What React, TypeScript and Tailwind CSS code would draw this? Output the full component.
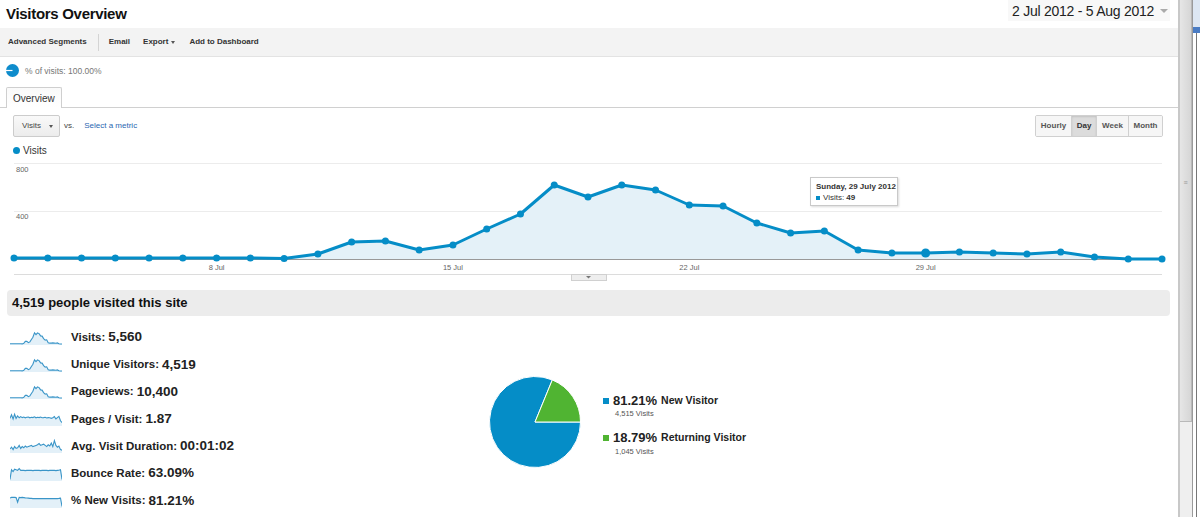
import React from "react";

const visitYs = [
  258, 258, 258, 258, 258, 258, 258, 258, 258.5, 254, 242, 241, 250, 245, 229, 214, 185, 197, 185, 190,
  205, 206, 223, 233, 231, 250, 253, 253, 252, 253, 254, 252, 257, 259, 259,
];

const px = (i: number) => 14 + (i * 1148) / 34;
const py = (i: number) => visitYs[i] - 160;

const linePath = visitYs.map((_, i) => `${i === 0 ? "M" : "L"}${px(i).toFixed(1)},${py(i)}`).join(" ");
const areaPath = `${linePath} L${px(34)},99 L${px(0)},99 Z`;

// sparkline shapes, 0 = bottom, 1 = top
const visitsShape = visitYs.map((y) => (259 - y) / 80);
const pagesShape = [
  0.55, 0.85, 0.5, 0.9, 0.55, 0.75, 0.6, 0.7, 0.62, 0.66, 0.6, 0.64, 0.66, 0.6, 0.64, 0.62, 0.68, 0.6, 0.64,
  0.62, 0.66, 0.6, 0.62, 0.64, 0.58, 0.62, 0.6, 0.56, 0.6, 0.7, 0.5, 0.62, 0.72, 0.35, 0.2,
];
const durationShape = [
  0.25, 0.4, 0.2, 0.45, 0.3, 0.35, 0.55, 0.3, 0.45, 0.35, 0.5, 0.4, 0.45, 0.5, 0.55, 0.45, 0.5, 0.55, 0.6,
  0.7, 0.55, 0.6, 0.65, 0.55, 0.45, 0.6, 0.5, 0.75, 0.45, 0.95, 0.55, 0.4, 0.5, 0.2, 0.15,
];
const bounceShape = [
  0.05, 0.85, 0.7, 0.9, 0.85, 0.8, 0.95, 0.8, 0.82, 0.8, 0.78, 0.8, 0.82, 0.8, 0.8, 0.78, 0.8, 0.8, 0.82,
  0.8, 0.78, 0.8, 0.8, 0.82, 0.8, 0.78, 0.8, 0.8, 0.82, 0.8, 0.78, 0.8, 0.82, 0.85, 0.05,
];
const newShape = [
  0.75, 0.8, 0.82, 0.8, 0.78, 0.4, 0.8, 0.78, 0.8, 0.78, 0.76, 0.75, 0.74, 0.72, 0.72, 0.7, 0.7, 0.7, 0.7,
  0.7, 0.7, 0.71, 0.7, 0.7, 0.7, 0.7, 0.71, 0.7, 0.7, 0.7, 0.7, 0.7, 0.72, 0.74, 0.05,
];

const metrics = [
  { label: "Visits:", value: "5,560", shape: visitsShape },
  { label: "Unique Visitors:", value: "4,519", shape: visitsShape },
  { label: "Pageviews:", value: "10,400", shape: visitsShape },
  { label: "Pages / Visit:", value: "1.87", shape: pagesShape },
  { label: "Avg. Visit Duration:", value: "00:01:02", shape: durationShape },
  { label: "Bounce Rate:", value: "63.09%", shape: bounceShape },
  { label: "% New Visits:", value: "81.21%", shape: newShape },
];

function Sparkline({ shape }: { shape: number[] }) {
  const w = 52;
  const h = 14;
  const pts = shape.map((v, i) => [(i * w) / (shape.length - 1), h - 1 - Math.min(1, v) * (h - 2)]);
  const line = pts.map((p, i) => `${i === 0 ? "M" : "L"}${p[0].toFixed(1)},${p[1].toFixed(1)}`).join(" ");
  return (
    <svg width={w} height={h} viewBox={`0 0 ${w} ${h}`} className="shrink-0">
      <path d={`${line} L${w},${h} L0,${h} Z`} fill="#e3f0f8" />
      <path d={line} fill="none" stroke="#3a95c8" strokeWidth="1.1" />
    </svg>
  );
}

function TrafficChart() {
  const gridX1 = 14;
  const gridX2 = 1162;
  return (
    <div className="relative h-[122px] w-full">
      <svg width="1178" height="122" viewBox="0 0 1178 122" className="block">
        <line x1={gridX1} x2={gridX2} y1="3.5" y2="3.5" stroke="#ececec" />
        <line x1={gridX1} x2={gridX2} y1="51.5" y2="51.5" stroke="#ececec" />
        <text x="16" y="12" fontSize="7.5" fill="#666" fontFamily="Liberation Sans, Arial, sans-serif">800</text>
        <text x="16" y="59" fontSize="7.5" fill="#666" fontFamily="Liberation Sans, Arial, sans-serif">400</text>
        <path d={areaPath} fill="#e4f1f8" />
        <line x1={gridX1} x2={gridX2} y1="99.5" y2="99.5" stroke="#999" />
        <path d={linePath} fill="none" stroke="#058dc7" strokeWidth="3" strokeLinejoin="round" />
        {visitYs.map((_, i) => (
          <circle key={i} cx={px(i)} cy={py(i)} r={i === 27 ? 4.5 : 3.5} fill="#058dc7" />
        ))}
        {[
          { i: 6, t: "8 Jul" },
          { i: 13, t: "15 Jul" },
          { i: 20, t: "22 Jul" },
          { i: 27, t: "29 Jul" },
        ].map((l) => (
          <text
            key={l.t}
            x={px(l.i)}
            y="110"
            textAnchor="middle"
            fontSize="7.5"
            fill="#666"
            fontFamily="Liberation Sans, Arial, sans-serif"
          >
            {l.t}
          </text>
        ))}
        <line x1={gridX1} x2={gridX2} y1="114.5" y2="114.5" stroke="#dcdcdc" />
        <rect x="571.5" y="114.5" width="35" height="6" fill="#eeeeee" stroke="#d0d0d0" />
        <path d="M586 116 L591 116 L588.5 118.5 Z" fill="#777" />
      </svg>
      <div className="absolute left-[810px] top-[17px] h-[29px] w-[88px] border border-[#c9c9c9] bg-white pl-[5px] pt-[3px] shadow-[1px_1px_2px_rgba(0,0,0,0.15)]">
        <div className="whitespace-nowrap text-[8px] font-bold leading-[11px] text-[#333]">Sunday, 29 July 2012</div>
        <div className="flex items-center whitespace-nowrap text-[8px] leading-[11px] text-[#333]">
          <span className="mr-[3px] inline-block h-[4px] w-[4px] bg-[#058dc7]" />
          Visits: <span className="ml-[2px] font-bold">49</span>
        </div>
      </div>
    </div>
  );
}

function Pie() {
  const cx = 46;
  const cy = 46;
  const r = 45.5;
  const a = (67.64 * Math.PI) / 180;
  const ex = cx + r * Math.cos(a);
  const ey = cy - r * Math.sin(a);
  return (
    <svg width="92" height="92" viewBox="0 0 92 92" className="shrink-0">
      <path d={`M${cx},${cy} L${ex},${ey} A${r},${r} 0 1 0 ${cx + r},${cy} Z`} fill="#058dc7" stroke="#fff" strokeWidth="1" />
      <path d={`M${cx},${cy} L${cx + r},${cy} A${r},${r} 0 0 0 ${ex},${ey} Z`} fill="#50b432" stroke="#fff" strokeWidth="1" />
    </svg>
  );
}

export default function App() {
  return (
    <div className="flex h-[517px] w-[1200px] overflow-hidden bg-white font-['Liberation_Sans',Arial,sans-serif] text-[#222]">
      <main className="w-[1178px] shrink-0">
        {/* Header */}
        <div className="flex h-[28px] items-start justify-between">
          <h1 className="pl-[6px] pt-[5px] text-[15px] font-bold leading-[18px] tracking-[-0.3px] text-[#111]">
            Visitors Overview
          </h1>
          <div className="mr-[8px] flex h-[21px] w-[162px] items-center bg-[#f8f8f8] pl-[4px]">
            <span className="text-[14px] leading-[20px] tracking-[-0.25px] text-[#222]">2 Jul 2012 - 5 Aug 2012</span>
            <span className="ml-[6px] h-0 w-0 border-x-[4px] border-t-[4px] border-x-transparent border-t-[#aaa]" />
          </div>
        </div>

        {/* Toolbar */}
        <div className="flex h-[29px] items-center border-b border-[#e3e3e3] bg-[#f3f3f3] pl-[8px] text-[8px] font-bold text-[#333]">
          <span>Advanced Segments</span>
          <span className="ml-[11px] h-[17px] w-px bg-[#d4d4d4]" />
          <span className="ml-[10px]">Email</span>
          <span className="ml-[13px]">Export</span>
          <span className="ml-[3px] h-0 w-0 border-x-[2.5px] border-t-[3px] border-x-transparent border-t-[#555]" />
          <span className="ml-[14px]">Add to Dashboard</span>
        </div>

        {/* Segment */}
        <div className="flex h-[30px] items-start pl-[6px] pt-[7px]">
          <svg width="13" height="13" viewBox="0 0 13 13">
            <circle cx="6.5" cy="6.5" r="6.5" fill="#0e8ccc" />
            <line x1="0" y1="6.5" x2="6.5" y2="6.5" stroke="#fff" strokeWidth="1.2" />
          </svg>
          <span className="ml-[6px] mt-[2px] text-[8.5px] leading-[10px] text-[#777]">% of visits: 100.00%</span>
        </div>

        {/* Tabs */}
        <div className="flex h-[21px] items-end border-b border-[#d0d0d0] pl-[6px]">
          <div className="mb-[-1px] flex h-[21px] w-[56px] items-center rounded-t-[2px] border border-b-0 border-[#cfcfcf] bg-gradient-to-b from-[#fafafa] to-white pl-[6px] text-[10px] text-[#333]">
            Overview
          </div>
        </div>

        {/* Controls */}
        <div className="flex h-[33px] items-start justify-between pl-[13px] pr-[15px] pt-[7px]">
          <div className="flex items-center">
            <div className="flex h-[22px] w-[47px] items-center rounded-[2px] border border-[#cccccc] bg-gradient-to-b from-[#f9f9f9] to-[#ececec] pl-[8px] text-[8px] text-[#444]">
              Visits
              <span className="ml-[8px] h-0 w-0 border-x-[2.5px] border-t-[3px] border-x-transparent border-t-[#555]" />
            </div>
            <span className="ml-[4px] text-[8px] text-[#444]">vs.</span>
            <span className="ml-[10px] text-[8px] text-[#2a67b1]">Select a metric</span>
          </div>
          <div className="flex h-[22px] overflow-hidden rounded-[2px] border border-[#d0d0d0] text-[8px] font-bold text-[#555]">
            <span className="flex w-[35px] items-center justify-center bg-[#f6f6f6]">Hourly</span>
            <span className="flex w-[25px] items-center justify-center border-l border-[#d0d0d0] bg-[#dcdcdc] text-[#333] shadow-[inset_0_1px_2px_rgba(0,0,0,0.12)]">
              Day
            </span>
            <span className="flex w-[32px] items-center justify-center border-l border-[#d0d0d0] bg-[#f6f6f6]">Week</span>
            <span className="flex w-[34px] items-center justify-center border-l border-[#d0d0d0] bg-[#f6f6f6]">Month</span>
          </div>
        </div>

        {/* Legend */}
        <div className="flex h-[19px] items-center pl-[13px]">
          <span className="h-[7px] w-[7px] rounded-full bg-[#058dc7]" />
          <span className="ml-[3px] text-[10px] text-[#333]">Visits</span>
        </div>

        <TrafficChart />

        {/* Summary */}
        <div className="ml-[7px] mt-[8px] flex h-[26px] w-[1163px] items-center rounded-[4px] bg-[#ececec] pl-[5px]">
          <span className="text-[13px] font-bold text-[#111]">4,519 people visited this site</span>
        </div>

        {/* Bottom */}
        <div className="flex items-start">
          <div className="w-[489px] pl-[10px] pt-[8px]">
            {metrics.map((m) => (
              <div key={m.label} className="flex h-[27.2px] items-center">
                <Sparkline shape={m.shape} />
                <span className="ml-[9px] text-[11.5px] font-bold text-[#222]">{m.label}</span>
                <span className="ml-[3px] text-[13.5px] font-bold text-[#222]">{m.value}</span>
              </div>
            ))}
          </div>
          <div className="mt-[60px]">
            <Pie />
          </div>
          <div className="ml-[22px] mt-[77px]">
            <div className="flex h-[16px] items-center">
              <span className="h-[6px] w-[6px] bg-[#058dc7]" />
              <span className="ml-[4px] text-[13px] font-bold text-[#222]">81.21%</span>
              <span className="ml-[4px] text-[10.5px] font-bold text-[#222]">New Visitor</span>
            </div>
            <div className="ml-[12px] h-[10px] text-[7.5px] leading-[10px] text-[#555]">4,515 Visits</div>
            <div className="mt-[11px] flex h-[16px] items-center">
              <span className="h-[6px] w-[6px] bg-[#50b432]" />
              <span className="ml-[4px] text-[13px] font-bold text-[#222]">18.79%</span>
              <span className="ml-[4px] text-[10.5px] font-bold text-[#222]">Returning Visitor</span>
            </div>
            <div className="ml-[12px] mt-[1px] h-[10px] text-[7.5px] leading-[10px] text-[#555]">1,045 Visits</div>
          </div>
        </div>
      </main>

      {/* Window scrollbar strip */}
      <div className="flex w-[22px] shrink-0">
        <div className="flex w-[14px] flex-col border-l-2 border-[#c8c8c8] bg-[#efefef]">
          <div className="flex h-[422px] items-start justify-center border-b border-r border-[#b9b9b9] bg-gradient-to-r from-[#e6e6e6] to-[#d6d6d6] pt-[179px]">
            <span className="text-[7px] leading-[7px] text-[#999]">≡</span>
          </div>
        </div>
        <div className="flex w-[8px] flex-col border-l border-[#9a9a9a] bg-white">
          <div className="h-[27px] bg-[#dde7f3]" />
          <div className="h-[6px] bg-[#4a7cc4]" />
          <div className="ml-[3px] flex-1 border-l border-[#777]" />
        </div>
      </div>
    </div>
  );
}
